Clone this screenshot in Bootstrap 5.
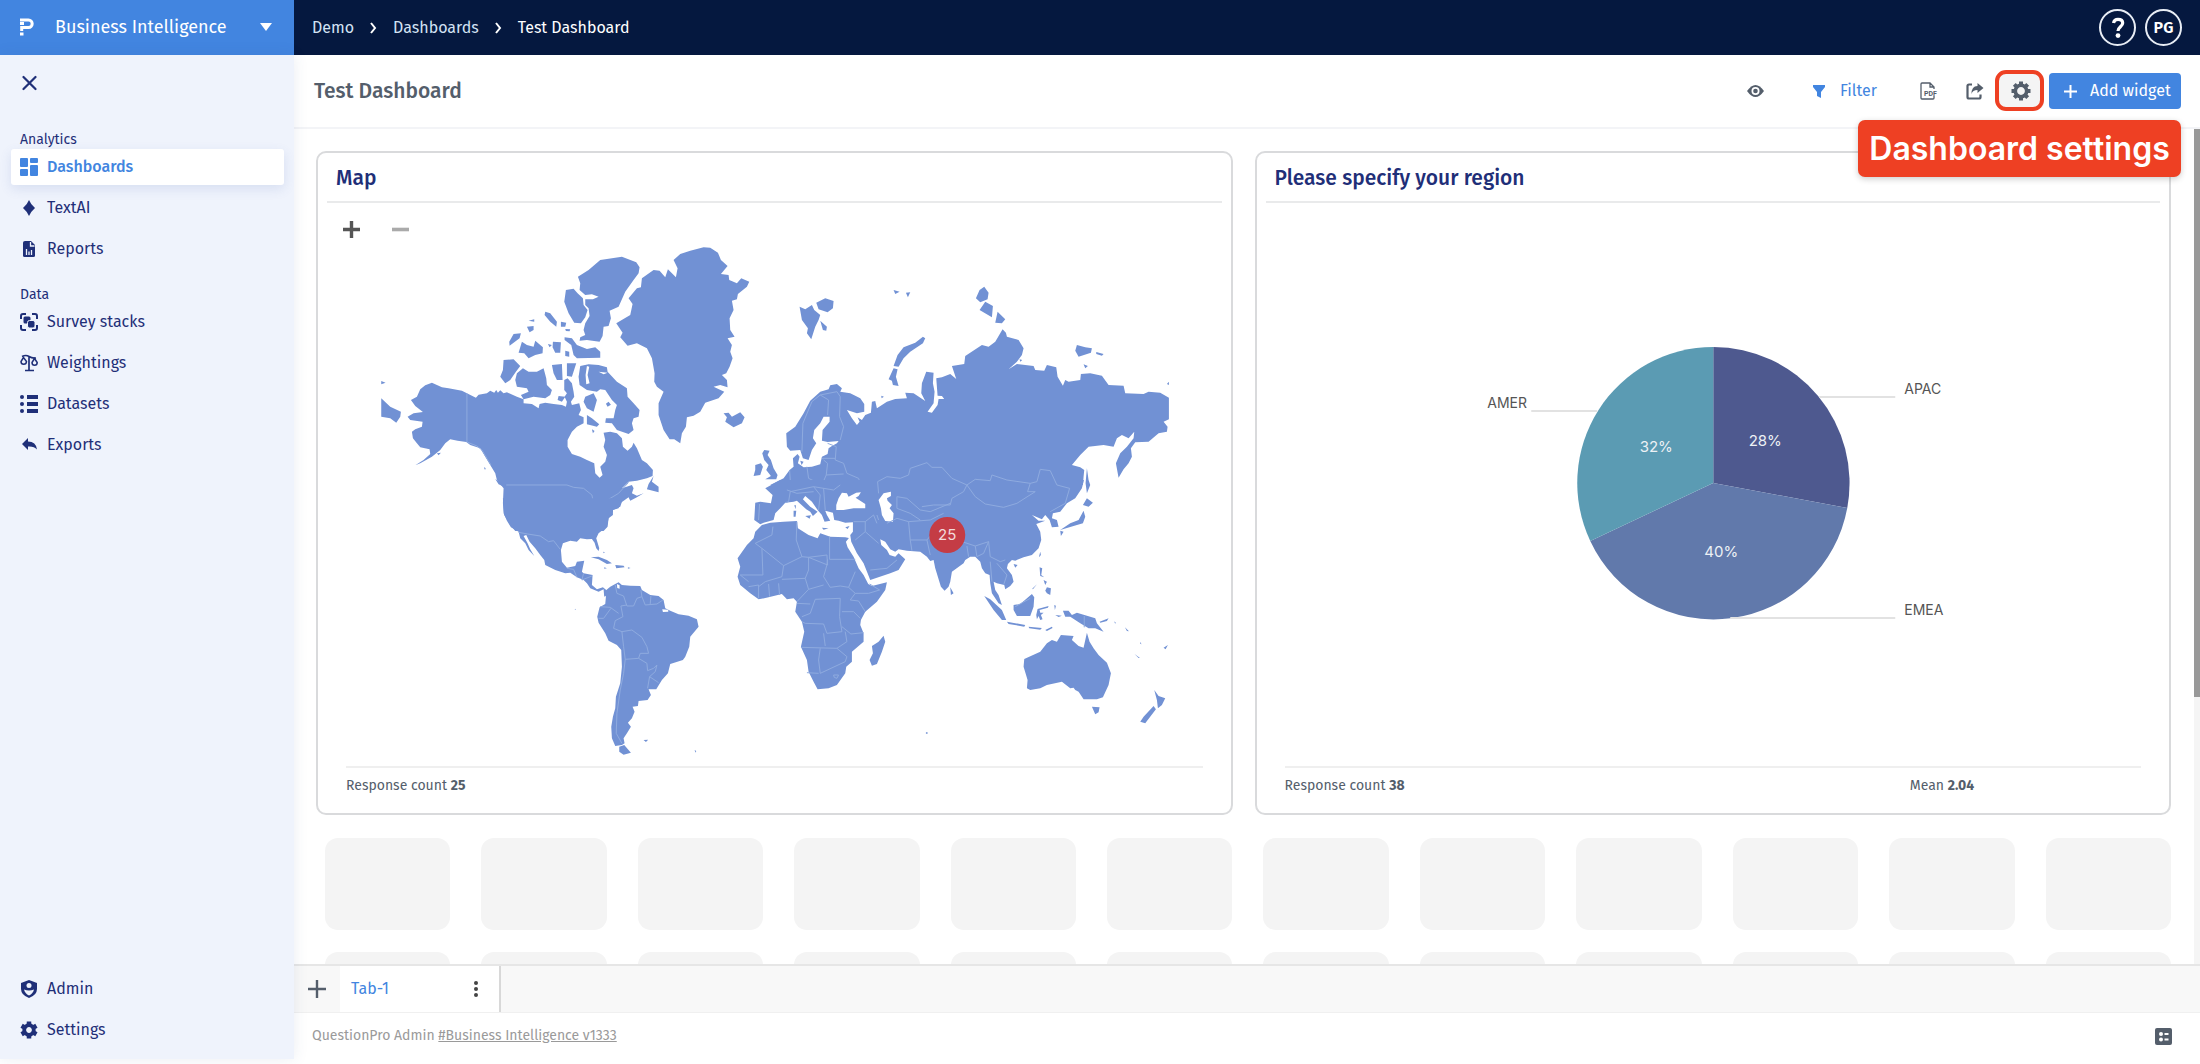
<!DOCTYPE html>
<html lang="en">
<head>
<meta charset="utf-8">
<meta name="viewport" content="width=device-width, initial-scale=1">
<title>Test Dashboard</title>
<link rel="stylesheet" href="https://cdn.jsdelivr.net/npm/bootstrap@5.3.0/dist/css/bootstrap.min.css">
<style>
  :root { --qp-blue:#4285e0; --qp-navy:#05183f; --qp-ink:#1f2f78; --qp-grey:#545e6b; --qp-side:#eff3fc; }
  body { font-family:"Fira Sans","Noto Sans",sans-serif; font-size:16px; line-height:20px; color:var(--qp-grey); background:#fff; overflow:hidden; }
  a { text-decoration:none; color:inherit; }
  svg { display:block; flex:none; }
  button { font:inherit; color:inherit; background:none; border:0; padding:0; }
  .topbar { height:55px; background:var(--qp-navy); flex:none; }
  .side-w { width:294px; flex:none; }
  .brand { background:var(--qp-blue); color:#fff; font-size:18px; padding:0 22px 2px 20px; gap:21px; }
  .crumbs { gap:16px; padding-left:18px; color:#d3e2f4; }
  .crumbs .active { color:#fff; }
  .account { gap:9px; padding-right:18px; }
  .round-btn { width:37px; height:37px; border:2px solid #e8edf5; border-radius:50%; color:#fff; font-weight:600; }
  .page-body, .min-w { min-width:0; min-height:0; }
  .sidebar { background:var(--qp-side); color:var(--qp-ink); margin-bottom:5px; padding:16px 10px 11px 11px; box-shadow:0 0 14px rgba(60,80,130,.10); z-index:1; }
  .close-btn { margin:0 0 36px 11px; }
  .side-label { font-size:14px; line-height:18px; padding-left:9px; }
  .side-nav { gap:5px; }
  .side-nav.first { margin-bottom:19px; }
  .side-link { height:36px; gap:9px; padding-left:9px; border-radius:3px; }
  .side-link.active { background:#fff; color:var(--qp-blue); box-shadow:0 4px 12px rgba(70,100,180,.14); }
  .toolbar { height:74px; flex:none; padding:0 19px 0 20px; border-bottom:2px solid #f3f4f7; }
  .toolbar h1 { font-size:21px; line-height:24px; font-weight:500; margin:0; }
  .tool { width:46px; height:36px; }
  .add-btn { background:var(--qp-blue); color:#fff; height:36px; width:132px; border-radius:4px; gap:13px; padding-left:15px; margin-left:5px; }
  .filter-btn { color:var(--qp-blue); gap:15px; margin:0 29px 0 35px; }
  .ring { position:absolute; inset:-3px 0 -2px -3px; border:4px solid #ee4023; border-radius:11px; pointer-events:none; }
  .gear-bg { background:#f4f4f4; border-radius:6px; }
  .callout { position:absolute; right:-137px; top:47px; z-index:5; height:57px; width:323px; border-radius:7px; background:#ee4023; color:#fff; font:600 32px/57px Inter,sans-serif; text-align:center; white-space:nowrap; box-shadow:0 2px 6px rgba(0,0,0,.2); }
  .canvas { padding:22px 23px 0 22px; }
  .widgets { display:grid; grid-template-columns:1fr 1fr; gap:22px; }
  .widget { border:2px solid #d9dadc; border-radius:10px; min-width:0; }
  .widget h2 { font-size:21px; line-height:24px; font-weight:500; color:var(--qp-ink); margin:0 9px; padding:13px 9px 11px; border-bottom:2px solid #e9eaeb; }
  .plot { height:563px; }
  .zooms { position:absolute; left:25px; top:18px; gap:32px; }
  .stats { margin:0 28px; border-top:2px solid #efefef; padding:8px 0 17px; font-size:14px; }
  .stats b { font-weight:700; }
  .mean { width:27%; }
  .slots { display:grid; grid-template-columns:repeat(12,1fr); gap:22px 31px; margin:23px 0 0 9px; }
  .slot { height:92px; border-radius:13px; background:#f4f4f4; }
  .scroll { width:6px; background:#f5f5f5; }
  .thumb { height:68%; background:#999; }
  .tabs { height:49px; flex:none; border-top:2px solid #e6e6e6; background:#f8f8f8; border-bottom:1px solid #f0f0f0; }
  .tab { width:161px; background:#fff; border-right:2px solid #d8d8d8; padding:0 17px 0 11px; color:var(--qp-blue); }
  .foot { height:51px; flex:none; padding:0 28px 5px 18px; color:#9a9a9a; font-size:14px; }
  .foot a { text-decoration:underline; }
  .land { fill:#7191d4; }
  .sea { fill:#fff; }
  .lines { fill:none; stroke:#8fabdf; stroke-width:3; }
  .chart-txt { font:15px Inter,sans-serif; }
  .chart-label { font:14px Inter,sans-serif; }
</style>
<script src="https://cdn.jsdelivr.net/npm/bootstrap@5.3.0/dist/js/bootstrap.bundle.min.js"></script>
</head>
<body class="vh-100 d-flex flex-column">

<header class="topbar d-flex">
  <button class="brand side-w d-flex align-items-center" type="button">
    <svg width="14" height="18" viewBox="0 0 14 18" fill="none" stroke="#fff" stroke-width="3"><path d="M0 2h8.500a3.700 3.700 0 0 1 0 7.400H1.700V13"/><path d="M0 5.500h4M0 16h3.500"/></svg>
    <span class="me-auto">Business Intelligence</span>
    <svg width="12" height="8" viewBox="0 0 12 8"><path d="M0 0h12L6 8z" fill="#fff"/></svg>
  </button>
  <nav class="d-flex flex-fill align-items-center" aria-label="breadcrumb">
    <ol class="crumbs list-unstyled d-flex align-items-center mb-0">
      <li><a href="#">Demo</a></li>
      <li aria-hidden="true"><svg width="7" height="12" viewBox="0 0 7 12" fill="none" stroke="#fff" stroke-width="2"><path d="M1 1l4 5-4 5"/></svg></li>
      <li><a href="#">Dashboards</a></li>
      <li aria-hidden="true"><svg width="7" height="12" viewBox="0 0 7 12" fill="none" stroke="#fff" stroke-width="2"><path d="M1 1l4 5-4 5"/></svg></li>
      <li class="active" aria-current="page">Test Dashboard</li>
    </ol>
  </nav>
  <div class="account d-flex align-items-center">
    <button class="round-btn d-flex align-items-center justify-content-center" type="button" aria-label="Help">
      <svg width="14" height="22" viewBox="0 0 14 22"><path d="M2.500 6c.5-2.500 2-3.700 4.500-3.700 3 0 4.700 1.400 4.700 3.700 0 3.600-4.700 4-4.700 8" fill="none" stroke="#fff" stroke-width="3.200"/><circle cx="7" cy="18.600" r="2.400" fill="#fff"/></svg>
    </button>
    <button class="round-btn" type="button">PG</button>
  </div>
</header>

<div class="page-body d-flex flex-fill">
  <aside class="sidebar side-w d-flex flex-column">
    <button type="button" aria-label="Close menu" class="close-btn align-self-start">
      <svg width="15" height="24" viewBox="0 0 15 24" stroke="#1f2f78" stroke-width="2.200" stroke-linecap="round"><path d="M1.500 6l12 12M13.500 6l-12 12"/></svg>
    </button>
    <div class="side-label">Analytics</div>
    <nav class="side-nav first d-flex flex-column">
      <a href="#" class="side-link active d-flex align-items-center fw-medium"><svg width="18" height="20" viewBox="0 0 18 20" fill="#4285e0"><rect y="1" width="8" height="9" rx="1"/><rect y="12" width="8" height="7" rx="1"/><rect x="10" y="1" width="8" height="5" rx="1"/><rect x="10" y="8" width="8" height="11" rx="1"/></svg>Dashboards</a>
      <a href="#" class="side-link d-flex align-items-center"><svg width="18" height="18" viewBox="0 0 18 18"><path d="M9 1q1.500 4 6 8-4.500 4-6 8-1.500-4-6-8 4.500-4 6-8z" fill="#1f2f78"/></svg>TextAI</a>
      <a href="#" class="side-link d-flex align-items-center"><svg width="18" height="18" viewBox="0 0 18 18"><path d="M5 1h6l4 4v10.500q0 1.500-1.500 1.500h-9Q3 17 3 15.500V2.500Q3 1 5 1z" fill="#1f2f78"/><path d="M10.500 2v4H14.500M6.500 15V9M9 15v-3.500M11.500 15V10" stroke="#eff3fc" stroke-width="1.300" fill="none"/></svg>Reports</a>
    </nav>
    <div class="side-label">Data</div>
    <nav class="side-nav d-flex flex-column">
      <a href="#" class="side-link d-flex align-items-center"><svg width="18" height="18" viewBox="0 0 18 18" fill="#1f2f78"><path d="M1 6V3q0-2 2-2h3M12 1h3q2 0 2 2v3M17 12v3q0 2-2 2h-3M6 17H3q-2 0-2-2v-3" fill="none" stroke="#1f2f78" stroke-width="2"/><rect x="3.500" y="3.500" width="7" height="7" rx="1.500"/><rect x="7.500" y="7.500" width="7.500" height="7.500" rx="2" stroke="#eff3fc"/></svg>Survey stacks</a>
      <a href="#" class="side-link d-flex align-items-center"><svg width="18" height="18" viewBox="0 0 18 18" fill="none" stroke="#1f2f78" stroke-width="1.700"><path d="M2 2.500q4-2 7 0t7 1.500M9 2.500v14M5 16.500h9"/><path d="M3.500 3.500L1 7.500q0 2.800 2.700 2.800T6.500 7.500zM14.500 4.500L12 8.500q0 2.800 2.600 2.800T17.200 8.500z" stroke-width="1.500"/></svg>Weightings</a>
      <a href="#" class="side-link d-flex align-items-center"><svg width="18" height="18" viewBox="0 0 18 18" fill="#1f2f78"><circle cx="2" cy="2" r="2"/><circle cx="2" cy="9" r="2"/><circle cx="2" cy="16" r="2"/><path d="M7 0h11v4H7zM7 7h11v4H7zM7 14h11v4H7z"/></svg>Datasets</a>
      <a href="#" class="side-link d-flex align-items-center"><svg width="18" height="18" viewBox="0 0 18 18"><path d="M2 8l6-6v3.500q8 0 9 8-3-3.500-9-3V14z" fill="#1f2f78"/></svg>Exports</a>
    </nav>
    <nav class="side-nav d-flex flex-column mt-auto">
      <a href="#" class="side-link d-flex align-items-center"><svg width="18" height="18" viewBox="0 0 18 18"><path d="M9 0l8 3v6q0 6-8 9-8-3-8-9V3z" fill="#1f2f78"/><circle cx="9" cy="5.500" r="2.500" fill="#eff3fc"/><path d="M4 9.500q5 2 10 0-1 4-5 6-4-2-5-6z" fill="#eff3fc"/></svg>Admin</a>
      <a href="#" class="side-link d-flex align-items-center"><svg width="18" height="18" viewBox="-9 -9 18 18"><circle r="4.800" fill="none" stroke="#1f2f78" stroke-width="3.800"/><path d="M0-8.500v4M0 8.500v-4M-7.400-4.300l3.500 2M7.400 4.300l-3.500-2M-7.400 4.300l3.500-2M7.400-4.300l-3.500 2" stroke="#1f2f78" stroke-width="4.500"/></svg>Settings</a>
    </nav>
  </aside>

  <main class="min-w d-flex flex-column flex-fill">
    <div class="toolbar d-flex align-items-center">
      <h1 class="me-auto">Test Dashboard</h1>
      <button type="button" class="tool d-flex align-items-center justify-content-center" aria-label="Preview"><svg width="17" height="12" viewBox="0 0 17 12"><path d="M0 6q8.500-12 17 0-8.500 12-17 0z" fill="#545e6b"/><circle cx="8.500" cy="6" r="4" fill="#fff"/><circle cx="8.500" cy="6" r="2.300" fill="#545e6b"/></svg></button>
      <button type="button" class="filter-btn d-flex align-items-center"><svg width="12" height="13" viewBox="0 0 12 13"><path d="M0 0h12v2L8 7v6l-4-2V7L0 2z" fill="#4285e0"/></svg><span>Filter</span></button>
      <button type="button" class="tool d-flex align-items-center justify-content-center" aria-label="Export as PDF"><svg width="18" height="18" viewBox="0 0 18 18"><path d="M14 14v2q0 1-1 1H2q-1 0-1-1V2q0-1 1-1h8l4 4v2M10 1v4h4" fill="none" stroke="#545e6b" stroke-width="1.300"/><text x="4" y="13.500" font-size="7" font-weight="700" fill="#545e6b" font-family="Roboto,sans-serif">PDF</text></svg></button>
      <button type="button" class="tool d-flex align-items-center justify-content-center" aria-label="Share"><svg width="18" height="18" viewBox="0 0 18 18"><path d="M6 2.500H3q-1.500 0-1.500 1.500v11Q1.500 16.500 3 16.500h10q1.500 0 1.500-1.500v-2.500" fill="none" stroke="#545e6b" stroke-width="2.200"/><path d="M11.500 1l6 5-6 5V8q-5 0-6 4 0-8 6-8z" fill="#545e6b"/></svg></button>
      <div class="position-relative">
        <button type="button" class="tool gear-bg d-flex align-items-center justify-content-center" aria-label="Dashboard settings"><svg width="20" height="20" viewBox="-10 -10 20 20"><circle r="5.700" fill="none" stroke="#545e6b" stroke-width="3.600"/><path d="M0-9.500v4M0 9.500v-4M-9.500 0h4M9.500 0h-4M-6.700-6.700l3 3M6.700 6.700l-3-3M-6.700 6.700l3-3M6.700-6.700l-3 3" stroke="#545e6b" stroke-width="4"/></svg></button>
        <span class="ring"></span>
        <div class="callout" role="tooltip">Dashboard settings</div>
      </div>
      <button type="button" class="add-btn d-flex align-items-center"><svg width="13" height="13" viewBox="0 0 13 13" stroke="#fff" stroke-width="2"><path d="M6.500 0v13M0 6.500h13"/></svg><span class="text-nowrap">Add widget</span></button>
    </div>

    <div class="d-flex flex-fill overflow-hidden">
      <div class="canvas min-w flex-fill">
        <div class="widgets">
          <section class="widget">
            <h2>Map</h2>
            <div class="plot position-relative">
              <div class="zooms d-flex">
                <button type="button" aria-label="Zoom in"><svg width="17" height="17" viewBox="0 0 17 17" stroke="#555" stroke-width="3.400"><path d="M8.500 0v17M0 8.500h17"/></svg></button>
                <button type="button" aria-label="Zoom out"><svg width="17" height="17" viewBox="0 0 17 17" stroke="#aaa" stroke-width="3.600"><path d="M0 8.500h17"/></svg></button>
              </div>
              <svg class="w-100 h-100" viewBox="318 203 912 563" role="img" aria-label="World map of responses">
                <g transform="translate(370 230) scale(.33333)">
                  <path class="land" d="M185 458L215 472 235 475 275 482 290 490 317 503 325 494 350 490 360 482 372 488 378 480 383 488 390 481 400 490 410 487 440 500 460 508 460 520 485 522 505 535 508 522 525 518 550 522 575 525 587 530 590 515 583 500 590 490 582 480 582 450 592 445 605 460 610 485 612 500 602 515 605 525 627 520 632 540 625 555 640 562 640 580 620 590 605 605 592 630 592 650 605 672 630 680 650 690 672 700 675 730 688 743 697 735 690 710 705 695 710 675 700 650 705 630 700 608 720 605 740 610 755 625 758 650 772 662 785 650 790 638 800 655 815 690 830 700 848 720 847 738 830 745 800 752 775 755 755 775 785 765 790 775 785 790 800 797 820 790 800 802 780 812 775 802 750 820 745 835 728 840 728 855 715 865 712 890 700 903 435 903 420 885 402 855 398 820 400 775 380 750 375 730 360 705 345 680 330 655 300 645 288 636 262 632 240 628 225 640 210 660 185 680 150 700 135 706 160 690 180 672 178 658 150 652 140 640 128 625 125 605 135 598 155 590 157 575 120 570 112 560 130 550 158 546 135 528 122 510 140 500 150 478 165 466Z"/>
                  <path class="land" d="M1000 52L1020 53 1043 68 1052 90 1072 108 1052 132 1075 135 1077 150 1100 160 1113 145 1137 155 1130 170 1103 192 1100 208 1085 212 1090 240 1078 265 1080 300 1093 320 1072 325 1085 345 1080 365 1087 385 1078 410 1068 430 1055 435 1070 450 1072 472 1050 465 1030 470 1062 485 1045 505 1005 518 990 545 970 557 950 562 947 590 935 610 930 640 912 628 898 628 880 600 865 555 865 520 880 485 860 470 852 455 853 430 845 385 830 355 800 340 772 347 750 322 757 308 738 280 780 255 787 222 775 205 800 175 812 172 815 145 850 120 868 122 885 142 893 118 917 142 922 115 910 90 930 72 960 62Z"/>
                  <path class="land" d="M690 90L755 80 798 97 808 112 805 130 790 150 765 185 745 230 718 242 722 265 715 288 700 290 697 318 688 335 650 330 628 332 630 322 645 315 640 300 645 280 658 258 655 235 645 225 645 208 668 208 685 200 665 193 645 195 628 180 630 160 623 140 655 120ZM587 180L610 176 622 190 638 205 640 225 652 240 645 262 632 280 612 278 595 250 582 215ZM583 322L605 325 620 345 650 357 675 352 690 365 690 383 620 385 610 375 603 345 583 330ZM525 245L540 250 560 275 558 290 540 275 523 255ZM572 275L588 278 585 290 572 290ZM585 297L600 298 598 304 587 303ZM470 290L490 288 490 300 478 307ZM475 272L492 268 492 275ZM430 312L452 310 448 325 418 347 417 335ZM455 335L470 345 490 350 495 332 518 352 517 370 495 375 475 385 462 370 445 368ZM548 335L572 337 570 368 555 368 547 352ZM533 342L545 345 538 352ZM585 362L597 365 597 380 585 378ZM400 390L430 388 450 408 437 425 420 450 405 460 390 440 398 420ZM440 430L458 415 475 425 500 425 520 415 528 445 530 465 545 480 540 495 525 505 490 500 460 508 452 495 475 485 470 475 440 470 435 450ZM545 405L575 402 577 450 560 450 550 430ZM590 400L618 400 605 440 590 438ZM630 408L655 403 685 405 710 412 712 425 740 455 770 475 772 500 790 520 808 540 805 560 790 565 785 580 790 600 775 612 740 600 725 580 705 578 707 565 730 565 735 540 740 525 725 510 705 480 690 478 680 485 650 480 628 465 625 440ZM565 498L585 500 575 515 562 510ZM645 500L670 490 680 510 670 545 650 535 640 515ZM650 555L665 565 687 583 680 590 650 583ZM715 515L722 524 712 530 707 521ZM665 598L673 603 668 610ZM850 738L845 755 865 770 865 787 830 778 835 762ZM33 505L60 530 92 545 90 560 78 578 60 565 33 560ZM33 453L46 458 33 463ZM1060 550L1075 548 1085 560 1110 547 1123 562 1115 580 1090 592 1065 575 1070 562ZM375 747L405 767 410 775 385 763ZM200 670L212 668 205 676ZM343 710L347 718 342 718Z"/>
                  <path class="sea" d="M650 408L657 410 652 435 658 460 648 463 646 435ZM685 425L712 428 700 433Z"/>
                  <path class="lines" d="M290 490V636L320 648 335 660 350 685 362 705M408 765H590L610 772 640 775 665 795 672 830 690 825 715 808 745 790 775 757"/>
                </g>
                <g transform="translate(440 500) scale(.33333)">
                  <path class="land" d="M188-5L190 40 200 62 212 82 235 95 240 115 255 130 265 150 282 168 270 148 262 130 250 108 258 105 268 125 285 145 300 165 312 180 315 195 345 210 375 220 390 218 410 232 430 240 440 250 450 265 475 275 490 268 492 290 500 285 498 270 488 262 470 268 455 255 457 225 430 220 425 215 432 182 410 185 405 198 380 203 365 185 362 150 368 130 390 122 410 125 420 115 440 118 455 117 463 128 468 145 475 153 477 145 468 115 475 100 500 80 505 55 518 35 518 30 540 20 545 5 520-5Z"/>
                  <path class="land" d="M492 275L510 260 525 252 535 247 545 255 570 257 600 258 605 270 630 285 655 288 670 300 675 325 690 332 715 343 745 347 770 358 775 380 750 410 747 440 735 470 728 480 690 492 683 520 665 540 648 568 625 568 632 585 622 600 595 603 593 618 577 620 583 635 575 655 563 668 572 680 560 700 550 715 553 730 545 735 525 738 515 715 513 680 518 650 525 625 527 590 540 550 545 500 543 450 530 435 505 422 495 400 475 368 471 350 478 322 495 312 497 290ZM537 740L552 735 572 758 550 764 537 755ZM452 172L475 170 500 180 515 190 500 192 475 178ZM525 195L550 197 553 202 528 205ZM492 202L500 205 492 206ZM563 202L571 204 563 206ZM610 720L624 719 617 726ZM763 750L768 753 766 758ZM489 155L494 157 490 160ZM404 326L407 328 404 330Z"/>
                  <path class="sea" d="M530 252L538 256 538 266 531 264ZM666 328L684 329 684 335 668 336Z"/>
                  <path class="lines" d="M235 97L262 102 300 108 325 125 340 122 360 148M380 205L400 208 410 232M430 220L425 240 455 228M525 255L530 280 550 288 560 318 580 318 590 295 605 290 602 270M605 290L615 315 650 312 668 300M632 288L630 312M560 315L542 318 548 350 525 362 520 385 545 395 575 390 605 412 620 440 625 460 600 460 595 475 555 478 550 440 545 395M480 320L510 322 535 340M475 355L490 355 512 325M595 475L620 490 622 512 640 505 650 495 645 515 628 530 622 565M628 530L655 548M555 478L550 520 540 570 530 640 528 700 545 730"/>
                </g>
                <g transform="translate(740 230) scale(.33333)">
                  <path class="land" d="M90 765L130 745 148 720 160 710 158 685 172 672 178 680 173 700 190 712 215 710 240 703 245 680 262 672 265 655 275 648 290 640 295 633 262 636 245 632 247 600 268 575 268 560 250 560 240 580 222 600 218 625 228 640 215 660 205 690 188 685 180 660 150 662 140 650 138 610 165 590 190 550 210 512 240 485 265 478 270 466 290 462 305 475 300 485 330 490 360 505 372 522 372 545 350 550 320 540 335 565 350 585 358 575 352 562 365 570 375 555 392 548 395 515 405 513 410 535 440 515 465 507 500 505 495 488 520 490 555 513 543 490 545 460 558 425 580 428 578 460 583 485 580 520 562 545 575 548 592 525 595 507 612 507 605 498 592 497 588 445 605 442 630 432 648 447 635 408 672 402 675 378 725 345 745 350 765 335 787 298 797 308 800 320 835 330 850 355 845 375 830 395 805 418 830 402 880 408 885 420 912 422 920 405 948 412 952 440 968 467 975 450 985 455 1020 450 1022 432 1050 430 1085 437 1105 465 1150 467 1155 490 1210 492 1225 485 1260 488 1286 503 1286 568 1270 575 1282 590 1280 605 1255 610 1225 635 1185 637 1172 655 1175 680 1165 700 1150 718 1135 743 1127 700 1140 670 1160 650 1180 625 1182 605 1165 625 1145 615 1130 625 1120 650 1090 645 1045 650 1020 675 995 705 1020 712 1032 720 1030 740 1028 765Z"/>
                  <path class="land" d="M72 660L88 662 82 675 92 690 100 715 112 735 108 748 75 748 92 738 78 720 85 705 72 690 66 670ZM45 705L62 700 68 710 60 735 40 738 45 720ZM178 230L195 238 215 225 222 240 240 255 235 270 225 290 213 328 200 310 203 295 185 270ZM228 218L255 205 280 213 278 235 262 247 235 238ZM240 272L260 290 258 302 248 300ZM460 180L478 185 465 192ZM497 188L510 187 503 202ZM548 320L555 325 548 340 510 365 490 385 475 410 460 408 472 375 490 352 525 338ZM460 415L472 418 467 440 475 468 458 465 455 452 445 448ZM718 180L732 170 745 188 742 208 720 217 707 205ZM735 215L758 228 755 262 718 240ZM772 245L795 268 785 280 765 278ZM1010 345L1035 352 1055 355 1052 368 1015 380 1005 362ZM1068 366L1090 372 1085 377 1068 372ZM1030 403L1043 408 1035 415ZM838 388L846 390 840 395ZM423 497L431 500 424 505ZM1286 455L1280 462 1286 465ZM1040 715L1045 750 1050 765 1040 790 1036 760ZM1040 805L1058 818 1045 830 1028 825ZM180 692L190 695 184 705Z"/>
                  <path class="lines" d="M185 665L188 580 215 515 240 495 265 510 262 555M240 495L290 485 300 500 298 560 310 590 300 630M262 640L288 650 285 690 310 700 320 730 355 745 365 775 345 790M250 690L262 700 258 735 310 732M245 685H285M148 720L152 780M200 710L205 745 245 765 258 735M152 780L215 770 250 768"/>
                </g>
                <g transform="translate(730 460) scale(.33333)">
                  <path class="land" d="M150 60H1061L1055 85 1035 115 1010 130 990 155 968 160 965 175 980 180 985 200 965 202 958 180 945 165 935 178 905 165 925 182 945 182 918 192 930 215 933 240 925 265 905 285 880 292 855 302 845 300 833 312 830 325 845 345 850 365 840 378 825 388 822 375 800 370 790 365 795 390 805 405 815 435 805 430 785 400 780 370 778 345 765 340 755 325 750 305 735 290 720 290 705 300 700 310 665 335 660 365 655 380 643 392 632 380 615 325 610 300 600 303 590 290 570 275 530 272 505 268 495 275 480 268 465 245 450 238 453 255 470 270 478 285 495 290 505 280 525 298 505 330 480 340 420 360 412 340 400 310 380 280 363 245 360 225 368 215 368 187 345 188 325 182 312 180 308 158 285 152 290 165 300 182 283 185 275 165 262 150 245 125 225 108 218 118 240 140 262 155 248 168 240 155 228 148 200 122 190 125 165 128 150 145 135 160 130 180 100 188 90 193 72 180 75 128 90 125 122 130 127 105 105 85Z"/>
                  <path class="sea" d="M335 98L350 100 355 110 378 98 392 97 385 108 376 113 405 132 405 145 370 145 340 150 318 150 318 135 325 115ZM460 100L482 95 482 108 470 115 472 122 485 135 478 145 490 160 488 185 465 183 455 165 452 145 445 120Z"/>
                  <path class="land" d="M95 195L120 188 160 185 200 183 203 205 235 225 262 235 270 220 300 230 345 232 356 234 347 245 352 262 370 290 385 325 400 345 414 372 425 378 470 367 465 390 440 425 405 455 392 480 390 495 400 520 400 545 365 575 365 605 348 620 345 640 320 675 295 685 262 688 250 665 235 635 230 600 212 560 222 515 215 485 195 455 200 425 190 415 170 418 155 402 115 412 85 418 60 400 30 375 22 350 30 320 22 295 50 255 70 235 75 215Z"/>
                  <path class="land" d="M460 527L465 545 455 575 440 612 425 617 418 600 428 580 425 558 445 545ZM225 168L242 166 238 176ZM190 152L198 152 196 170 190 170ZM192 136L197 136 196 148ZM275 203L295 205 280 209ZM345 202L358 198 352 207ZM1060 152L1065 170 1058 190 1030 198 1000 207 990 210 1020 190 1045 180ZM990 212L1000 215 992 228ZM930 275L932 285 926 292ZM850 312L862 315 855 323ZM660 382L670 400 662 405ZM762 408L780 418 815 450 828 480 815 480 790 450ZM830 485L885 495 882 500 835 492ZM895 500L935 504 930 509 897 505ZM945 510L965 500 967 504 950 513ZM850 435L870 432 905 402 912 412 910 440 900 468 860 468 850 450ZM922 447L955 438 953 443 928 450 930 458 940 458 932 465 937 478 930 480 925 468 920 478 918 465ZM928 322L936 325 933 345 942 352 930 348ZM950 382L962 385 960 405 950 400 945 392ZM940 360L950 365 945 375ZM920 373L908 388 906 386ZM972 435L977 437 974 450ZM975 465L995 467 985 471ZM998 452L1015 452 1025 465 1040 458 1095 475 1100 490 1120 515 1095 505 1075 505 1050 490 1020 470 1005 470ZM1108 485L1135 475 1130 483 1110 488ZM1070 518L1078 545 1090 565 1105 585 1130 608 1142 640 1135 675 1118 712 1100 718 1060 718 1045 695 1035 690 1030 683 1020 685 995 665 950 675 930 685 900 690 890 685 892 660 880 620 882 597 930 575 950 550 965 540 980 545 992 525 1030 528 1025 540 1045 558 1060 563ZM1085 740L1108 742 1105 757 1095 763ZM1272 690L1285 708 1305 715 1295 735 1283 745 1280 720ZM1270 738L1277 748 1245 790 1230 785 1240 770ZM1213 582L1229 594 1225 594ZM1300 563L1313 555 1306 568ZM587 817H592V821H587ZM1152 484L1158 490 1154 490ZM1184 502L1196 514 1190 513ZM1229 545L1234 553 1230 551Z"/>
                  <path class="lines" d="M128 200L125 225 75 250 95 265 98 345 30 345M95 265L160 317 215 290 235 292 290 285 292 315 235 292M200 185L198 240 215 290M298 230V298H375M292 298L290 315 280 350 300 382 330 378 355 382 375 335M160 317L155 350 105 365 85 380M155 358L225 355 235 330V292M225 355L235 388 280 375M235 388L200 425M55 380L85 375V415M115 372L118 410M145 370L148 405M30 345L55 365M355 382L375 400 360 420 385 423 405 455M375 400L415 400 448 390 418 372M255 418L330 415 328 470 335 515 290 520 280 492 225 490 215 485M255 418L240 460 215 470M200 430L240 432M335 455L370 455 390 475M335 500L362 522 400 518M212 562L320 565 350 545 345 515M320 565L350 590 345 605 270 640 265 600 270 565M280 520L285 558M230 638L265 640M310 645L325 645 320 655 312 652ZM370 185L405 185 430 165 440 190M375 240L405 215 445 250M405 185V215M420 330L470 325 500 300M440 165L445 180M470 190L500 175 535 185 600 180 640 160M535 185L540 240 590 240 615 210M500 110L530 115 570 150 600 155 660 130M500 110V145L540 160 570 180M540 240L545 272M590 240L600 285M640 190L680 240 735 258 775 245M710 258L715 290M735 258L740 290 760 280 775 245 780 290 810 305 825 300M780 305L785 365M800 310L830 345 820 375M180 95L250 80 310 90 330 75M165 128L175 125 180 95M250 80L270 105 265 150M280 85L285 150M88 132L85 180M170 90L200 100 250 95M1062 468V502M855 440L900 415"/>
                  <path class="lines" d="M442 65L470 50 510 55 535 45 540 25 590 8 605 22 635 22 665 55 710 75 700 95 665 115 660 135 610 135 575 140M710 75L735 58 780 62 785 45 830 60 900 70 892 95 915 95 860 130 820 142 765 132 735 110 710 75M900 70L920 65 930 28 960 32 980 75 1018 85 1005 130 960 155M442 65L445 100"/>
                </g>
                <circle cx="947" cy="535" r="18" fill="#c43c45"/>
                <text class="chart-txt" x="947" y="540" text-anchor="middle" fill="#f3dada">25</text>
              </svg>
            </div>
            <div class="stats">Response count <b>25</b></div>
          </section>
          <section class="widget">
            <h2>Please specify your region</h2>
            <div class="plot">
              <svg class="w-100 h-100" viewBox="1257 203 912 563" role="img" aria-label="Responses by region">
                <path d="M1713 483V347A136 136 0 0 1 1847 508Z" fill="#4e598f"/>
                <path d="M1713 483L1847 508A136 136 0 0 1 1590 541Z" fill="#6179ab"/>
                <path d="M1713 483L1590 541A136 136 0 0 1 1713 347Z" fill="#5b9bb3"/>
                <path d="M1819 397H1895M1531 411H1597M1730 618H1895" stroke="#e2e2e2" stroke-width="2" fill="none"/>
                <g class="chart-txt" fill="#edf1f5" text-anchor="middle"><text x="1765" y="446">28%</text><text x="1656" y="452">32%</text><text x="1721" y="557">40%</text></g>
                <g class="chart-label" fill="#555"><text x="1904" y="394">APAC</text><text x="1487" y="408">AMER</text><text x="1904" y="615">EMEA</text></g>
              </svg>
            </div>
            <div class="stats d-flex"><span class="me-auto">Response count <b>38</b></span><span class="mean">Mean <b>2.04</b></span></div>
          </section>
        </div>
        <div class="slots">
          <div class="slot"></div><div class="slot"></div><div class="slot"></div><div class="slot"></div><div class="slot"></div><div class="slot"></div><div class="slot"></div><div class="slot"></div><div class="slot"></div><div class="slot"></div><div class="slot"></div><div class="slot"></div>
          <div class="slot"></div><div class="slot"></div><div class="slot"></div><div class="slot"></div><div class="slot"></div><div class="slot"></div><div class="slot"></div><div class="slot"></div><div class="slot"></div><div class="slot"></div><div class="slot"></div><div class="slot"></div>
        </div>
      </div>
      <div class="scroll"><div class="thumb"></div></div>
    </div>

    <div class="tabs d-flex">
      <button type="button" class="tool h-100 d-flex align-items-center justify-content-center" aria-label="Add tab"><svg width="18" height="18" viewBox="0 0 18 18" stroke="#545e6b" stroke-width="2.400"><path d="M9 0v18M0 9h18"/></svg></button>
      <div class="tab d-flex align-items-center justify-content-between">
        <a href="#">Tab-1</a>
        <button type="button" aria-label="Tab menu"><svg width="12" height="18" viewBox="0 0 12 18" fill="#444"><circle cx="6" cy="3" r="2"/><circle cx="6" cy="9" r="2"/><circle cx="6" cy="15" r="2"/></svg></button>
      </div>
    </div>
    <footer class="foot d-flex align-items-center justify-content-between">
      <div>QuestionPro Admin <a href="#">#Business Intelligence v1333</a></div>
      <button type="button" aria-label="Panels"><svg width="17" height="17" viewBox="0 0 17 17"><rect width="17" height="17" rx="2" fill="#545e6b"/><g fill="#fff"><circle cx="6" cy="6" r="2"/><circle cx="6" cy="11.500" r="2"/><rect x="9.500" y="5" width="4" height="2"/><rect x="9.500" y="10.500" width="4" height="2"/></g></svg></button>
    </footer>
  </main>
</div>
</body>
</html>
